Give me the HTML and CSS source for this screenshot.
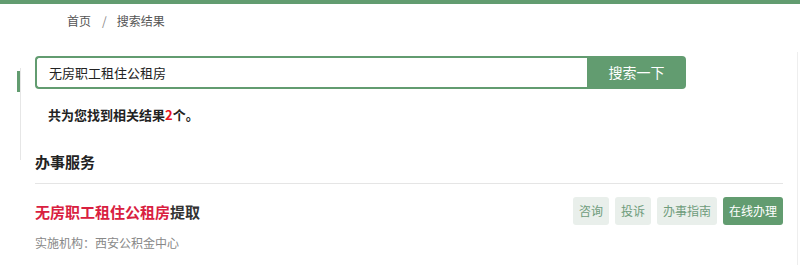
FILE: index.html
```html
<!DOCTYPE html>
<html lang="zh">
<head>
<meta charset="utf-8">
<link rel="stylesheet" href="styles.css">
</head>
<body>
<div class="topbar"></div>
<div class="crumbs"><span>首页</span><span class="sep">/</span><span>搜索结果</span></div>
<div class="page">
  <div class="side"><div class="mark"></div></div>
  <div class="main">
    <div class="search">
      <div class="input">无房职工租住公租房</div>
      <div class="btn">搜索一下</div>
    </div>
    <div class="count">共为您找到相关结果<em>2</em>个。</div>
    <div class="section">办事服务</div>
    <div class="item">
      <div class="row">
        <div class="title"><em>无房职工租住公租房</em>提取</div>
        <div class="acts">
          <span class="tag">咨询</span>
          <span class="tag">投诉</span>
          <span class="tag">办事指南</span>
          <span class="tag on">在线办理</span>
        </div>
      </div>
      <div class="org">实施机构：西安公积金中心</div>
    </div>
  </div>
  <div class="rline"></div>
</div>
</body>
</html>
```
FILE: styles.css
```css
html, body { margin: 0; padding: 0; background: #fff; overflow: hidden; }
body { font-family: "Microsoft YaHei", "Noto Sans CJK SC", sans-serif; color: #333; height: 265px; }
.topbar { height: 4px; background: #629c70; }
.crumbs { padding: 9px 0 0 67px; height: 22px; font-size: 12px; color: #555; line-height: 16px; }
.crumbs .sep { margin: 0 10px 0 11px; color: #888; }
.page { display: flex; margin-top: 21px; height: 209px; }
.side { width: 0; margin-left: 20px; border-left: 1px solid #e6e6e6; height: 92px; margin-top: 12px; position: relative; }
.side .mark { position: absolute; left: -4px; top: 3px; width: 3px; height: 21px; background: #629c70; }
.main { width: 748px; margin-left: 14px; }
.search { display: flex; height: 33px; width: 651px; }
.input { flex: 1; border: 2px solid #629c70; border-right: none; border-radius: 4px 0 0 4px; font-size: 13px; line-height: 29px; padding-left: 12px; color: #222; }
.btn { width: 99px; background: #629c70; color: #fff; font-size: 14px; text-align: center; line-height: 33px; border-radius: 0 4px 4px 0; }
.count { margin: 17px 0 0 13px; font-size: 13px; font-weight: bold; color: #222; line-height: 18px; }
.count em { font-style: normal; color: #e8141e; }
.section { margin-top: 27px; font-size: 15px; font-weight: bold; color: #222; line-height: 22px; padding-bottom: 10px; border-bottom: 1px solid #e5e5e5; }
.item { padding-top: 13px; }
.row { display: flex; justify-content: space-between; align-items: center; }
.title { font-size: 15px; font-weight: bold; color: #333; }
.title em { font-style: normal; color: #d9203f; }
.acts { display: flex; gap: 6px; }
.tag { font-size: 12px; line-height: 28px; padding: 0 6px; background: #e9efeb; color: #6e9c7b; border-radius: 3px; }
.tag.on { background: #629c70; color: #fff; }
.org { margin-top: 10px; font-size: 12px; color: #888; line-height: 16px; }
.rline { margin-left: 14px; margin-top: -4px; border-left: 1px solid #eee; height: 213px; }
```
